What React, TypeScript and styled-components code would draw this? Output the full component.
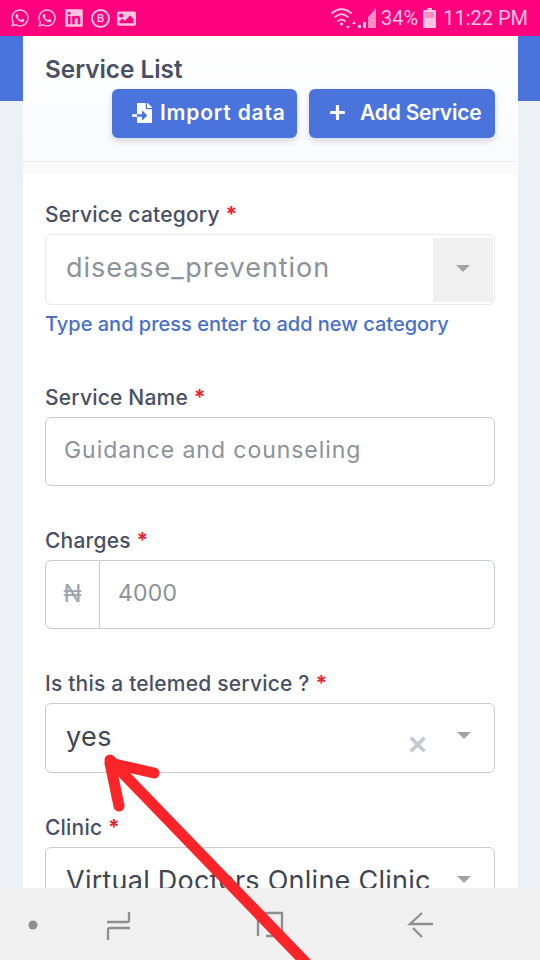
import React from "react";
import styled, { createGlobalStyle } from "styled-components";
import { FaWhatsapp, FaLinkedin, FaImage, FaFileImport, FaPlus } from "react-icons/fa";

const GlobalStyle = createGlobalStyle`
  html, body {
    margin: 0;
    padding: 0;
    background: #edf0f5;
  }
  * {
    box-sizing: border-box;
  }
`;

const Screen = styled.div`
  position: relative;
  width: 540px;
  height: 960px;
  overflow: hidden;
  background: #edf0f5;
  font-family: Inter, "Open Sans", sans-serif;
  color: #485064;
`;

const StatusBar = styled.div`
  position: relative;
  z-index: 2;
  height: 36px;
  background: #ff007f;
  color: #ffc4e0;
  display: flex;
  align-items: center;
  justify-content: space-between;
  padding: 0 12px 0 10px;
`;

const StatusIcons = styled.div`
  display: flex;
  align-items: center;
  gap: 7px;
`;

const BusinessBadge = styled.span`
  width: 19px;
  height: 19px;
  border: 2px solid #ffc4e0;
  border-radius: 50%;
  font: 700 10px "Liberation Sans", sans-serif;
  display: flex;
  align-items: center;
  justify-content: center;
`;

const StatusRight = styled.div`
  display: flex;
  align-items: center;
  font: 400 20px Roboto, sans-serif;
`;

const Percent = styled.span`
  margin: 0 5px 0 4px;
`;

const Clock = styled.span`
  margin-left: 7px;
`;

const Banner = styled.div`
  position: absolute;
  top: 36px;
  left: 0;
  right: 0;
  height: 65px;
  background: #4a74dc;
`;

const Content = styled.main`
  position: relative;
  margin: 0 22px 0 23px;
  background: #fbfbfd;
`;

const HeaderCard = styled.header`
  height: 126px;
  background: linear-gradient(#ffffff, #fafbfd);
  border-bottom: 1px solid #e9ecf1;
  padding: 17px 23px 0 22px;
`;

const Title = styled.h1`
  margin: 0;
  font-size: 24.3px;
  line-height: 33px;
  font-weight: 600;
  color: #485064;
`;

const Actions = styled.div`
  display: flex;
  justify-content: flex-end;
  gap: 12px;
  margin-top: 3px;
`;

const ActionButton = styled.button<{ $width: number; $gap: number; $tracking: number }>`
  width: ${(p) => p.$width}px;
  height: 49px;
  border: 0;
  border-radius: 6px;
  background: #4a74dc;
  color: #ffffff;
  font: 600 21px Inter, sans-serif;
  letter-spacing: ${(p) => p.$tracking}px;
  display: flex;
  align-items: center;
  gap: ${(p) => p.$gap}px;
  box-shadow: 0 3px 6px rgba(60, 70, 100, 0.2);
  white-space: nowrap;
  padding: 0 0 2px 20px;
`;

const FormCard = styled.section`
  margin-top: 12px;
  height: 800px;
  background: #ffffff;
  border-radius: 4px 4px 0 0;
  padding: 27px 23px 0 22px;
`;

const Field = styled.div<{ $gap: number }>`
  margin-bottom: ${(p) => p.$gap}px;
`;

const Label = styled.label`
  display: block;
  font-size: 21px;
  line-height: 27px;
  font-weight: 500;
  color: #485064;
  margin-bottom: 6px;
  letter-spacing: 0.2px;
  white-space: nowrap;
`;

const Star = styled.span`
  color: #e3262e;
  font-weight: 700;
`;

const Box = styled.div<{ $height: number; $faded?: boolean }>`
  height: ${(p) => p.$height}px;
  border: 1px solid ${(p) => (p.$faded ? "#e6e8eb" : "#c9ccd1")};
  border-radius: 6px;
  background: #ffffff;
  display: flex;
  align-items: center;
  overflow: hidden;
`;

const BoxText = styled.span<{ $muted?: boolean; $size: number; $tracking: number }>`
  flex: 1;
  padding: 0 0 4px ${(p) => (p.$size > 24 ? 20 : 18)}px;
  font-size: ${(p) => p.$size}px;
  letter-spacing: ${(p) => p.$tracking}px;
  color: ${(p) => (p.$muted ? "#8b9299" : "#3d4652")};
  white-space: nowrap;
`;

const Caret = styled.span`
  width: 0;
  height: 0;
  border-left: 7px solid transparent;
  border-right: 7px solid transparent;
  border-top: 7px solid #a0a2a6;
  margin: 0 23px 6px 0;
`;

const CaretCell = styled.span`
  width: 60px;
  height: 64px;
  margin-right: 1px;
  background: #f0f0f0;
  display: flex;
  align-items: center;
  justify-content: center;
  & > span {
    margin: 0 0 3px;
  }
`;

const Clear = styled.span`
  color: #c3c9cf;
  font: 700 32px "Liberation Sans", sans-serif;
  margin: 12px 30px 0 0;
`;

const Hint = styled.p`
  margin: 7px 0 0;
  font-size: 20px;
  line-height: 25px;
  font-weight: 500;
  color: #4a6fc9;
  white-space: nowrap;
`;

const Prefix = styled.span`
  width: 54px;
  height: 100%;
  border-right: 1px solid #c9ccd1;
  color: #a0a5ab;
  font-size: 24px;
  padding-bottom: 2px;
  display: flex;
  align-items: center;
  justify-content: center;
`;

const NavBar = styled.nav`
  position: absolute;
  left: 0;
  right: 0;
  bottom: 0;
  height: 72px;
  background: #f0f0f0;
  z-index: 3;
`;

const NavIcons = styled.svg`
  display: block;
  width: 540px;
  height: 72px;
`;

const Arrow = styled.svg`
  position: absolute;
  inset: 0;
  z-index: 4;
  pointer-events: none;
`;

const WifiSignal = () => (
  <svg width="46" height="22" viewBox="0 0 46 22" fill="none">
    <g stroke="#ffc4e0" strokeWidth="1.7" strokeLinecap="round">
      <path d="M1 6c6-5 13-5 19 0" />
      <path d="M4 10c4-3.400 9-3.400 13 0" />
      <path d="M7 14c2.500-2 4.500-2 7 0" />
    </g>
    <circle cx="10.500" cy="17" r="1.600" fill="#ffc4e0" />
    <path d="M15 19l2 3 2-3zM21 17l2-3 2 3z" fill="#ffc4e0" />
    <path d="M27 21h3v-3h-3zM32 21h3v-6h-3z" fill="#ffc4e0" />
    <path d="M37 21V10l8-9v20z" fill="#ff8cc4" />
  </svg>
);

const Battery = () => (
  <svg width="13" height="20" viewBox="0 0 13 20">
    <path d="M4 0h5v2h3a1 1 0 0 1 1 1v16a1 1 0 0 1-1 1H1a1 1 0 0 1-1-1V3a1 1 0 0 1 1-1h3z" fill="#ffc4e0" />
    <rect x="2" y="4" width="9" height="6" fill="#ff8cc4" />
  </svg>
);

export default function App() {
  return (
    <Screen>
      <GlobalStyle />
      <StatusBar>
        <StatusIcons>
          <FaWhatsapp size={20} />
          <FaWhatsapp size={20} />
          <FaLinkedin size={20} />
          <BusinessBadge>B</BusinessBadge>
          <FaImage size={19} />
        </StatusIcons>
        <StatusRight>
          <WifiSignal />
          <Percent>34%</Percent>
          <Battery />
          <Clock>11:22 PM</Clock>
        </StatusRight>
      </StatusBar>

      <Banner />

      <Content>
        <HeaderCard>
          <Title>Service List</Title>
          <Actions>
            <ActionButton $width={185} $gap={8} $tracking={0.8}>
              <FaFileImport size={20} />
              Import data
            </ActionButton>
            <ActionButton $width={186} $gap={14} $tracking={-0.2}>
              <FaPlus size={17} />
              Add Service
            </ActionButton>
          </Actions>
        </HeaderCard>

        <FormCard>
          <Field $gap={47}>
            <Label>
              Service category <Star>*</Star>
            </Label>
            <Box $height={71} $faded>
              <BoxText $muted $size={27} $tracking={0.95}>disease_prevention</BoxText>
              <CaretCell>
                <Caret />
              </CaretCell>
            </Box>
            <Hint>Type and press enter to add new category</Hint>
          </Field>

          <Field $gap={41}>
            <Label>
              Service Name <Star>*</Star>
            </Label>
            <Box $height={69}>
              <BoxText $muted $size={23} $tracking={0.95}>Guidance and counseling</BoxText>
            </Box>
          </Field>

          <Field $gap={41}>
            <Label>
              Charges <Star>*</Star>
            </Label>
            <Box $height={69}>
              <Prefix>₦</Prefix>
              <BoxText $muted $size={23} $tracking={0.2}>4000</BoxText>
            </Box>
          </Field>

          <Field $gap={41}>
            <Label>
              Is this a telemed service ? <Star>*</Star>
            </Label>
            <Box $height={70}>
              <BoxText $size={27} $tracking={0.4}>yes</BoxText>
              <Clear>×</Clear>
              <Caret />
            </Box>
          </Field>

          <Field $gap={0}>
            <Label>
              Clinic <Star>*</Star>
            </Label>
            <Box $height={70}>
              <BoxText $size={27} $tracking={0.25}>Virtual Doctors Online Clinic</BoxText>
              <Caret />
            </Box>
          </Field>
        </FormCard>
      </Content>

      <NavBar>
        <NavIcons viewBox="0 0 540 72" fill="none">
          <circle cx="33" cy="37" r="4.500" fill="#8f8f8f" />
          <g stroke="#8f8f8f" strokeWidth="2.300">
            <path d="M129 24v8a2 2 0 0 1-2 2h-20" />
            <path d="M130 40h-20a2 2 0 0 0-2 2v10" />
            <path d="M258 48V25h24v23h-16" />
            <path d="M433 36h-23l12-11M413 40l9 9" />
          </g>
        </NavIcons>
      </NavBar>

      <Arrow width="540" height="960" viewBox="0 0 540 960" fill="none">
        <g stroke="#fb2529" strokeWidth="11" strokeLinecap="round" strokeLinejoin="round">
          <path d="M110 760L312 969" />
          <path d="M154 773L110 763L119 806" />
        </g>
      </Arrow>
    </Screen>
  );
}
